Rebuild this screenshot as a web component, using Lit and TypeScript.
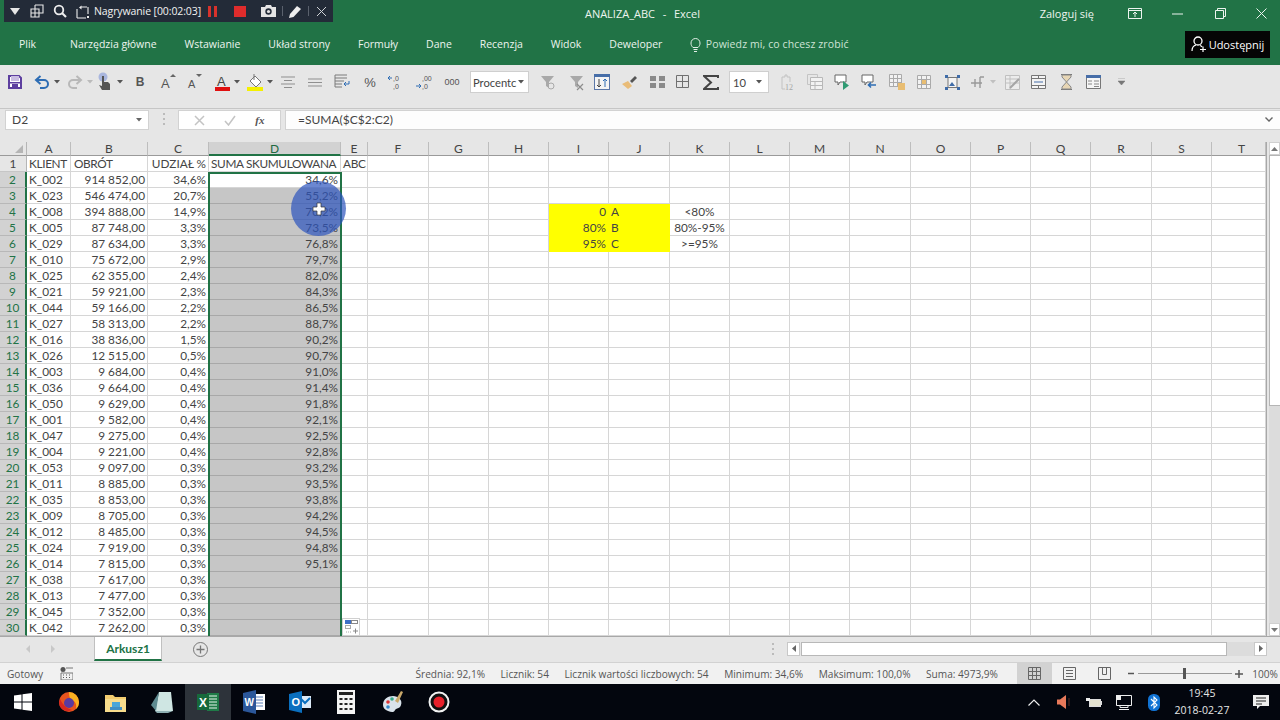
import { LitElement, html, css, svg } from "lit";
import { customElement } from "lit/decorators.js";

const ic = (w: number, h: number, b: unknown, cls = "") =>
  html`<svg class=${cls} width=${w} height=${h} viewBox="0 0 ${w} ${h}">${b}</svg>`;
const caret = (c = "#555") => ic(6, 4, svg`<path d="M0 0h6L3 3.5z" fill=${c}/>`);
const G = "#8f8f8f";
const BL = "#2e6db4";

type Item = { x: number; w: number; t: unknown };
function place(items: Item[], origin = 0) {
  let cur = origin;
  return items.map((it) => {
    const left = it.x - it.w / 2;
    const m = left - cur;
    cur = left + it.w;
    return html`<span class="slot" style="margin-left:${m}px;width:${it.w}px">${it.t}</span>`;
  });
}

const rec: Item[] = [
  { x: 15, w: 10, t: ic(10, 7, svg`<path d="M0 0h10L5 7z" fill="#e6e6e6"/>`) },
  { x: 37, w: 14, t: ic(14, 14, svg`<path d="M5 1h8v8H9M1 5h8v8H1zM5 5V1M1 9h8M5 5v8" fill="none" stroke="#e8e8e8" stroke-width="1.1"/>`) },
  { x: 60, w: 14, t: ic(14, 14, svg`<circle cx="6" cy="6" r="4.3" fill="none" stroke="#eee" stroke-width="1.8"/><path d="M9 9l4 4" stroke="#eee" stroke-width="2.2"/>`) },
  { x: 82, w: 15, t: ic(15, 15, svg`<path d="M2 14V5M2 14h9M6 3h6M13 3v7" fill="none" stroke="#eee" stroke-width="1.1"/><path d="M4 3.5L6.5 1.5v4zM12 12h2v2h-2z" fill="#eee"/>`) },
  { x: 147.5, w: 112, t: html`<span class="rectext">Nagrywanie [00:02:03]</span>` },
  { x: 212.5, w: 9, t: ic(9, 11, svg`<path d="M0 0h3v11H0zM6 0h3v11H6z" fill="#d8322c"/>`) },
  { x: 239.5, w: 12, t: ic(12, 11, svg`<rect width="12" height="11" fill="#df2c2c"/>`) },
  { x: 268, w: 15, t: ic(15, 12, svg`<path d="M0 2h4l1-2h5l1 2h4v10H0z" fill="#e4e4e4"/><circle cx="7.5" cy="6.5" r="3.2" fill="#232b38"/><circle cx="7.5" cy="6.5" r="1.6" fill="#e4e4e4"/>`) },
  { x: 282, w: 1, t: html`<span class="recsep"></span>` },
  { x: 295, w: 13, t: ic(13, 13, svg`<path d="M0 13l1-4 7-8 4 3-7.5 8z" fill="#eee"/>`) },
  { x: 308, w: 1, t: html`<span class="recsep"></span>` },
  { x: 321, w: 11, t: ic(11, 11, svg`<path d="M1 1l9 9M10 1l-9 9" stroke="#cfd2d6" stroke-width="1"/>`) },
];

const filterIco = svg`<path d="M2 2h13L10 8v6l-3-2V8z" fill="#a9a9a9"/>`;
const tb: Item[] = [
  { x: 15, w: 14, t: ic(14, 14, svg`<path d="M1 1h10l2 2v10H1z" fill="#fff" stroke="#5d3f9f" stroke-width="2"/><rect x="3" y="1" width="8" height="5" fill="#c9bce2"/><rect x="1" y="7" width="12" height="1.500" fill="#5d3f9f"/><rect x="4" y="9" width="6" height="4" fill="#5d3f9f"/>`) },
  { x: 42, w: 16, t: ic(16, 14, svg`<path d="M3 5h7a4 4 0 0 1 0 8H6" fill="none" stroke=${BL} stroke-width="2"/><path d="M6.5 1L2 5l4.500 4" fill="none" stroke=${BL} stroke-width="2"/>`) },
  { x: 56.5, w: 6, t: caret() },
  { x: 75, w: 16, t: ic(16, 14, svg`<path d="M13 5H6a4 4 0 0 0 0 8h4" fill="none" stroke="#b8b8b8" stroke-width="2"/><path d="M9.500 1L14 5 9.500 9" fill="none" stroke="#b8b8b8" stroke-width="2"/>`) },
  { x: 89.5, w: 6, t: caret("#bbb") },
  { x: 104, w: 14, t: ic(14, 20, svg`<circle cx="6" cy="5" r="4.5" fill="#a9b6de"/><path d="M5 4h2v6h4l2 2v6H5l-3-5 3 1z" fill="#555"/>`) },
  { x: 120, w: 6, t: caret() },
  { x: 140, w: 11, t: html`<span class="tb-b">B</span>` },
  { x: 168, w: 16, t: ic(16, 18, svg`<text x="1" y="15" class="ta" font-size="13" fill="#555">A</text><path d="M10 4l3-3 3 3z" fill="#666"/>`) },
  { x: 195, w: 16, t: ic(16, 18, svg`<text x="1" y="15" class="ta" font-size="11" fill="#555">A</text><path d="M9 1h6l-3 3z" fill="#666"/>`) },
  { x: 222, w: 15, t: ic(15, 18, svg`<text x="2" y="12.500" class="ta" font-size="13" fill="#444">A</text><rect y="14" width="15" height="4" fill="#e01010"/>`) },
  { x: 236.500, w: 6, t: caret() },
  { x: 255, w: 16, t: ic(16, 18, svg`<path d="M3 8l5-5 6 6-5 5z" fill="#fff" stroke="#777"/><path d="M7 1v6" stroke="#777"/><rect y="14" width="16" height="4" fill="#f4f000"/>`) },
  { x: 269.500, w: 6, t: caret() },
  { x: 288, w: 14, t: ic(14, 14, svg`<path d="M0 2h14M3 5.500h8M0 9h14M3 12.500h8" stroke=${G}/>`) },
  { x: 315, w: 14, t: ic(14, 10, svg`<path d="M0 2h14M0 5.500h14M0 9h14" stroke=${G}/>`) },
  { x: 342, w: 16, t: ic(16, 16, svg`<path d="M1 1h12M1 4h12M1 7h9M1 10h7M1 13h7M1 1v12" stroke="#7a7a7a" fill="none"/><path d="M15 7v3h-5M12 8l-2 2 2 2" stroke=${BL} fill="none"/>`) },
  { x: 370, w: 14, t: html`<span class="tb-t p">%</span>` },
  { x: 396, w: 16, t: ic(16, 16, svg`<text x="5" y="7" class="ta" font-size="7" fill="#555">,0</text><text x="5" y="15" class="ta" font-size="7" fill="#555">,0</text><path d="M4 4H0M2 2L0 4l2 2" fill="none" stroke=${BL}/>`) },
  { x: 424, w: 16, t: ic(16, 16, svg`<text x="6" y="7" class="ta" font-size="7" fill="#555">,00</text><text x="6" y="15" class="ta" font-size="7" fill="#555">,0</text><path d="M0 12h5M3 10l2 2-2 2" fill="none" stroke=${BL}/>`) },
  { x: 452, w: 16, t: html`<span class="tb-t z">000</span>` },
  { x: 499.500, w: 59, t: html`<span class="combo"><span>Procentc</span>${caret()}</span>` },
  { x: 547, w: 16, t: ic(16, 17, svg`${filterIco}<circle cx="12" cy="12" r="3" fill="none" stroke="#a9a9a9"/>`) },
  { x: 576, w: 16, t: ic(16, 17, svg`${filterIco}<path d="M9 10l6 6M15 10l-6 6" stroke="#8c8c8c" stroke-width="1.200"/>`) },
  { x: 602, w: 16, t: ic(16, 16, svg`<rect x=".5" y=".5" width="15" height="15" fill="#f4f4f4" stroke="#5b77a8"/><rect width="16" height="3" fill="#476ea8"/><path d="M5 5v8M3 11l2 2 2-2" fill="none" stroke="#444"/><path d="M11 13V5M9 7l2-2 2 2" fill="none" stroke=${BL}/>`) },
  { x: 630, w: 16, t: ic(16, 15, svg`<path d="M0 9l6-3 4 5-4 3z" fill="#e9bc78"/><path d="M8 6l5-5 2 2-5 5z" fill="#555"/>`) },
  { x: 657, w: 15, t: ic(15, 12, svg`<path d="M0 0h6v5H0zM9 0h6v5H9zM0 7h6v5H0zM9 7h6v5H9z" fill="#8a8a8a"/>`) },
  { x: 683, w: 14, t: ic(14, 14, svg`<path d="M.5.500h12v12H.5zM6.500.500v12M.5 6.500h12" fill="none" stroke="#707070"/>`) },
  { x: 711, w: 16, t: ic(16, 15, svg`<path d="M15 3V1H1l7 6.500L1 14h14v-2" fill="none" stroke="#444" stroke-width="2"/>`) },
  { x: 749, w: 40, t: html`<span class="combo c10"><span>10</span>${caret()}</span>` },
  { x: 788, w: 16, t: ic(16, 17, svg`<path d="M2 3h3V1h2v2h3v5M2 3v12h3" fill="none" stroke="#c2c2c2"/><text x="5" y="16" class="ts" font-size="8" fill="#a5a5a5">12</text>`) },
  { x: 815, w: 16, t: ic(16, 16, svg`<path d="M.5.500h10v3M.5.500v10h3" fill="none" stroke="#c4c4c4"/><path d="M3.500 3.500h12v12h-12zM3.500 7.500h12M3.500 11.500h12M8 7.500v8" fill="#f2f2f2" stroke="#b8b8b8"/>`) },
  { x: 842, w: 16, t: ic(16, 16, svg`<path d="M1 1h11v7H6l-2 3V8H1z" fill="#fff" stroke="#666"/><path d="M9 7l6 4.500L9 16z" fill="#2f9a72"/>`) },
  { x: 869, w: 16, t: ic(16, 16, svg`<path d="M1 1h11v7H6l-2 3V8H1z" fill="#fff" stroke="#666"/><path d="M15 11H8M10 8.500l-2.500 2.500 2.500 2.500" fill="none" stroke=${BL} stroke-width="1.600"/>`) },
  { x: 897, w: 16, t: ic(16, 16, svg`<path d="M.5.500h12v12H.5zM4.500.500v12M8.500.500v12M.5 4.500h12M.5 8.500h12" fill="#f2f2f2" stroke="#aaa"/><rect x="9" y="9" width="7" height="7" fill="#e8bd72"/>`) },
  { x: 924, w: 14, t: ic(14, 14, svg`<path d="M.5.500h13v13H.5zM.5 4.500h13M.5 9.500h13M4.500.500v13M9.500.500v13" fill="#f2f2f2" stroke="#aaa"/><rect x="5" y="5" width="4" height="4" fill="#e8bd72"/>`) },
  { x: 952, w: 15, t: ic(15, 15, svg`<rect x="3" y="2.500" width="9" height="10" fill="#f4f4f4" stroke="#777"/><path d="M4 11l3-4 3 4z" fill="#3f6ca8"/><path d="M0 0h3v3H0zM12 0h3v3h-3zM0 12h3v3H0zM12 12h3v3h-3z" fill="#3f6ca8"/>`) },
  { x: 978, w: 14, t: ic(14, 14, svg`<path d="M0 8h11M4 12V4M9 13V2M13 2H9" stroke="#999" stroke-width="1.400" fill="none"/>`) },
  { x: 993, w: 6, t: caret("#c0c0c0") },
  { x: 1012, w: 15, t: ic(15, 15, svg`<path d="M.5.500h14v14H.5zM.5 4h14M.5 8h14M5 .500v14" fill="#ececec" stroke="#c0c0c0"/><path d="M5 13L14 4" stroke="#a5a5a5" stroke-width="2"/>`) },
  { x: 1038, w: 15, t: ic(15, 14, svg`<path d="M.5.500h14v13H.5zM.5 3.500h14M.5 10.500h14M7.500.500v3M7.500 10.500v3" fill="#f4f4f4" stroke="#777"/><path d="M3 7h9" stroke="#476ea8"/>`) },
  { x: 1066, w: 13, t: ic(13, 16, svg`<path d="M1 .500h11M1 15.500h11" stroke="#777"/><path d="M2 1h9v2L6.500 8 11 13v2H2v-2l4.500-5L2 3z" fill="#e7d6b5" stroke="#888"/>`) },
  { x: 1093, w: 15, t: ic(15, 14, svg`<path d="M.5.500h14v13H.5z" fill="#f6f6f6" stroke="#777"/><rect width="15" height="3" fill="#476ea8"/><path d="M2 6h4M8 6h5M2 9h4M8 9h5M8 11.500h5" stroke="#888"/>`) },
  { x: 1121, w: 7, t: ic(7, 8, svg`<path d="M0 0h7M0 3h7L3.500 7z" fill="#777" stroke="#777" stroke-width=".5"/>`) },
];

const cols = "ABCDEFGHIJKLMNOPQRST".split("");
const colW = [44, 77, 61, 132, 27, 61, 60, 60, 60, 61, 60, 60, 60, 61, 60, 60, 60, 61, 60, 54];

const data: [string, string, string, string][] = [
  ["K_002", "914 852,00", "34,6%", "34,6%"],
  ["K_023", "546 474,00", "20,7%", "55,2%"],
  ["K_008", "394 888,00", "14,9%", "70,2%"],
  ["K_005", "87 748,00", "3,3%", "73,5%"],
  ["K_029", "87 634,00", "3,3%", "76,8%"],
  ["K_010", "75 672,00", "2,9%", "79,7%"],
  ["K_025", "62 355,00", "2,4%", "82,0%"],
  ["K_021", "59 921,00", "2,3%", "84,3%"],
  ["K_044", "59 166,00", "2,2%", "86,5%"],
  ["K_027", "58 313,00", "2,2%", "88,7%"],
  ["K_016", "38 836,00", "1,5%", "90,2%"],
  ["K_026", "12 515,00", "0,5%", "90,7%"],
  ["K_003", "9 684,00", "0,4%", "91,0%"],
  ["K_036", "9 664,00", "0,4%", "91,4%"],
  ["K_050", "9 629,00", "0,4%", "91,8%"],
  ["K_001", "9 582,00", "0,4%", "92,1%"],
  ["K_047", "9 275,00", "0,4%", "92,5%"],
  ["K_004", "9 221,00", "0,4%", "92,8%"],
  ["K_053", "9 097,00", "0,3%", "93,2%"],
  ["K_011", "8 885,00", "0,3%", "93,5%"],
  ["K_035", "8 853,00", "0,3%", "93,8%"],
  ["K_009", "8 705,00", "0,3%", "94,2%"],
  ["K_012", "8 485,00", "0,3%", "94,5%"],
  ["K_024", "7 919,00", "0,3%", "94,8%"],
  ["K_014", "7 815,00", "0,3%", "95,1%"],
  ["K_038", "7 617,00", "0,3%", ""],
  ["K_013", "7 477,00", "0,3%", ""],
  ["K_045", "7 352,00", "0,3%", ""],
  ["K_042", "7 262,00", "0,3%", ""],
];

const extras: Record<string, [string, string]> = {
  "I4": ["0", "r y"], "J4": ["A", "l y"],
  "I5": ["80%", "r y"], "J5": ["B", "l y"],
  "I6": ["95%", "r y"], "J6": ["C", "l y"],
  "K4": ["<80%", "c"], "K5": ["80%-95%", "c"], "K6": [">=95%", "c"],
  "A1": ["KLIENT", "l cap"], "B1": ["OBRÓT", "l cap ob"], "C1": ["UDZIAŁ %", "r"],
  "D1": ["SUMA SKUMULOWANA", "l cap"], "E1": ["ABC", "l cap"],
};

function cell(col: string, row: number) {
  let text = "";
  let cls = "cell";
  const ex = extras[col + row];
  if (ex) { text = ex[0]; cls += " " + ex[1]; }
  if (row >= 2) {
    const d = data[row - 2];
    if (col === "A") { text = d[0]; cls += " l"; }
    if (col === "B") { text = d[1]; cls += " r"; }
    if (col === "C") { text = d[2]; cls += " r"; }
    if (col === "D") { text = d[3]; cls += " r"; if (row > 2) cls += " sel"; }
  }
  return html`<div class=${cls}>${text}</div>`;
}

const tabs = ["Plik", "Narzędzia główne", "Wstawianie", "Układ strony", "Formuły", "Dane", "Recenzja", "Widok", "Deweloper"];
const stats = ["Średnia: 92,1%", "Licznik: 54", "Licznik wartości liczbowych: 54", "Minimum: 34,6%", "Maksimum: 100,0%", "Suma: 4973,9%"];

const task = [
  ic(18, 18, svg`<path d="M0 2.500L7.500 1.500V8.500H0zM8.500 1.300L18 0V8.500H8.500zM0 9.500h7.500v7L0 15.500zM8.500 9.500H18V18L8.500 16.700z" fill="#fff"/>`),
  ic(22, 22, svg`<circle cx="11" cy="11" r="10" fill="#e8541e"/><path d="M11 1a10 10 0 0 1 10 10c0 3-1 5-3 7 1-5-1-8-4-9-2-1-3-3-3-8z" fill="#fbb021"/><circle cx="11" cy="12" r="5" fill="#5a3aa0"/><path d="M2 8c2 4 5 9 12 11-5 3-13 0-13-8z" fill="#d8281f"/>`),
  ic(21, 19, svg`<path d="M0 2h8l2 2h11v15H0z" fill="#f2cc6f"/><rect y="6" width="21" height="13" fill="#f7dc8c"/><rect x="7" y="9" width="8" height="5" fill="#49a6d8"/><rect x="5" y="14" width="12" height="3" fill="#3f8fc4"/>`),
  ic(22, 22, svg`<path d="M8 1h12l2 19H4z" fill="#cfe6e3"/><path d="M8 1L0 14l5 6z" fill="#5d8a90"/><path d="M4 20h18l-5 2H6z" fill="#8fb0b3"/>`),
  ic(22, 22, svg`<rect x="10" y="2" width="12" height="18" fill="#1f7a47"/><path d="M12 5h8M12 8h8M12 11h8M12 14h8M12 17h8" stroke="#e8f4ec"/><rect y="3" width="12" height="16" fill="#17693b"/><text x="2" y="15.500" class="tw" font-size="12" fill="#fff">X</text>`),
  ic(22, 24, svg`<rect x="10" y="4" width="12" height="16" fill="#fff"/><path d="M12 7h8M12 10h8M12 13h8M12 16h8" stroke="#5a7fb8"/><path d="M0 3l13-3v24L0 21z" fill="#2b579a"/><text x="1.500" y="16" class="tw" font-size="10" fill="#fff">W</text>`),
  ic(22, 22, svg`<rect x="10" y="5" width="12" height="12" fill="#dbe9f7"/><path d="M12 8l4 4 5-5" fill="none" stroke="#0a6fbf" stroke-width="2"/><path d="M0 3l13-3v22L0 19z" fill="#0a6fbf"/><text x="2.500" y="15" class="tw" font-size="11" fill="#fff">O</text>`),
  ic(18, 24, svg`<rect width="18" height="24" fill="#f4f4f4"/><rect x="2" y="2" width="14" height="3" fill="#222"/><path d="M2.500 8h3v2h-3zM7.500 8h3v2h-3zM12.500 8h3v2h-3zM2.500 13h3v2h-3zM7.500 13h3v2h-3zM12.500 13h3v2h-3zM2.500 18h3v2h-3zM7.500 18h3v2h-3zM12.500 18h3v2h-3z" fill="#222"/>`),
  ic(22, 24, svg`<path d="M1 15c0-6 5-9 10-9s10 4 8 9c-1 4-5 3-6 5-1 3-4 2-7 1-3-1-5-3-5-6z" fill="#d9e2ea"/><circle cx="6" cy="12" r="1.800" fill="#d33"/><circle cx="10" cy="9" r="1.800" fill="#3a8"/><circle cx="6" cy="17" r="1.800" fill="#38c"/><path d="M13 11L19 1l2 1-5 11z" fill="#c9a86a"/>`),
  ic(22, 22, svg`<circle cx="11" cy="11" r="9.500" fill="#111" stroke="#f2f2f2" stroke-width="2"/><circle cx="11" cy="11" r="5.500" fill="#e8202a"/>`),
];

@customElement("app-root")
export class AppRoot extends LitElement {
  static styles = css`
    :host { display: flex; flex-direction: column; width: 1280px; height: 720px; position: relative; overflow: hidden;
      font-family: "Open Sans", "Liberation Sans", sans-serif; background: #e6e6e6; color: #444; }
    svg { display: block; flex: none; }
    svg text.ta { font-family: "Liberation Sans", sans-serif; }
    svg text.ts { font-family: "Liberation Serif", serif; }
    svg text.tw { font-family: "Liberation Sans", sans-serif; font-weight: 700; }
    .slot { flex: none; display: flex; align-items: center; justify-content: center; }

    .head { height: 65px; background: #217346; color: #edf4ef; display: flex; flex-direction: column; flex: none; position: relative; }
    .title { height: 27px; display: grid; grid-template-columns: 1fr auto 1fr; align-items: center; font-size: 11px; box-sizing: border-box; }
    .ttl { padding-left: 5px; word-spacing: 1px; }
    .winbtns { display: flex; justify-content: flex-end; align-items: center; }
    .login { margin-right: 19px; }
    .wb { width: 43px; display: flex; justify-content: center; }
    .wb.last { width: 38px; }
    .tabs { flex: 1; display: flex; align-items: center; gap: 27.9px; padding: 0 10px 4px 19px; font-size: 10.5px; }
    .tabs span.first { margin-right: 6px; }
    .tell { display: flex; align-items: center; gap: 5px; margin-left: -0.5px; color: #cfe3d6; letter-spacing: 0.1px; }
    .share { margin-left: auto; width: 85px; height: 27px; background: #050505; color: #fff; display: flex; align-items: center; justify-content: center; gap: 3px; font-size: 11px; box-sizing: border-box; }

    .recbar { position: absolute; left: 4px; top: 0; width: 329px; height: 22px; background: #232b38; display: flex; align-items: center; color: #f2f2f2; }
    .rectext { font-size: 10.5px; white-space: nowrap; letter-spacing: -0.1px; }
    .recsep { width: 1px; height: 10px; background: #5a616d; display: block; }

    .toolbar { height: 44px; flex: none; background: #e6e6e6; border-bottom: 1px solid #c6c6c6; box-sizing: border-box; display: flex; align-items: flex-start; padding-top: 7px; }
    .toolbar .slot { height: 20px; }
    .tb-b { font: 700 12px "Liberation Sans", sans-serif; color: #555; }
    .tb-t { color: #555; font-family: "Liberation Sans", sans-serif; }
    .tb-t.p { font-size: 13px; }
    .tb-t.z { font-size: 9px; }
    .combo { width: 100%; height: 22px; flex: none; background: #fff; border: 1px solid #cfcfcf; box-sizing: border-box; display: flex; align-items: center; justify-content: space-between; padding: 0 4px 0 2px; font-family: "Lato", sans-serif; font-size: 11.2px; color: #444; overflow: hidden; }
    .c10 { padding: 0 6px 0 3px; }

    .fbar { height: 33px; flex: none; background: #e6e6e6; display: flex; align-items: flex-start; padding-top: 1px; box-sizing: border-box; }
    .box { height: 20px; background: #fff; border: 1px solid #d2d2d2; box-sizing: border-box; display: flex; align-items: center; padding-bottom: 1px; font-family: "Lato", sans-serif; font-size: 12px; color: #444; }
    .name { width: 144px; margin-left: 5px; padding: 0 6px 1px; justify-content: space-between; }
    .vdots { width: 29px; display: flex; justify-content: center; padding-top: 3px; }
    .fx { width: 103px; justify-content: space-around; padding: 0 6px; }
    .fxt { font: italic 700 11px "Liberation Serif", serif; color: #555; }
    .fm { flex: 1; margin-left: 4px; padding: 0 7px 1px 12px; justify-content: space-between; background: #fdfdfd; border-right: none; }

    .sheetrow { flex: none; height: 495px; display: flex; border-bottom: 1px solid #a8a8a8; box-sizing: border-box; position: relative; }
    .sheet { display: grid; grid-template-rows: 14px repeat(30, 16px); height: 494px; overflow: hidden; font-family: "Lato", sans-serif; font-size: 11.8px; color: #444; background: #fff; border-right: 1px solid #a8a8a8; flex: none; }
    .corner { background: #e6e6e6; border-right: 1px solid #b5b5b5; border-bottom: 1px solid #9a9a9a; box-sizing: border-box; display: flex; align-items: flex-end; justify-content: flex-end; padding: 0 3px 2px 0; }
    .ch { background: #e6e6e6; border-right: 1px solid #bdbdbd; border-bottom: 1px solid #9a9a9a; box-sizing: border-box; display: flex; justify-content: center; align-items: center; font-size: 12px; color: #444; line-height: 13px; }
    .ch.on { background: #d2d2d2; color: #1f6b42; border-bottom: 2px solid #217346; }
    .ch.tcol { padding-left: 6px; }
    .rh { background: #e6e6e6; border-right: 1px solid #b5b5b5; border-bottom: 1px solid #c6c6c6; box-sizing: border-box; display: flex; align-items: center; justify-content: center; color: #444; }
    .rh.on { background: #d2d2d2; color: #217346; border-right: 2px solid #217346; border-bottom-color: #b8b8b8; }
    .cell { border-right: 1px solid #d6d6d6; border-bottom: 1px solid #d6d6d6; box-sizing: border-box; padding: 0 2px; display: flex; align-items: center; white-space: nowrap; line-height: 15px; overflow: visible; min-width: 0; }
    .cell.l { justify-content: flex-start; }
    .cell.r { justify-content: flex-end; }
    .cell.c { justify-content: center; }
    .cell.cap { letter-spacing: -0.35px; }
    .cell.ob { padding-left: 3px; }
    .cell.y { background: #ffff00; border-color: #ffff00; }
    .cell.sel { background: #c6c6c6; border-right-color: #aaa; border-bottom-color: #a8a8a8; }
    .selbox { position: absolute; left: 208px; top: 30px; width: 134px; height: 464px; box-sizing: border-box; border: 2px solid #217346; border-bottom: none; pointer-events: none; z-index: 1; }

    .quick { position: absolute; left: 342px; top: 476px; width: 18px; height: 18px; background: #fff; border: 1px solid #d0d0d0; box-sizing: border-box; display: flex; align-items: center; justify-content: center; z-index: 2; }
    .cursor { position: absolute; left: 291px; top: 39px; width: 55px; height: 55px; border-radius: 50%; background: rgba(44, 84, 190, 0.7); display: flex; align-items: center; justify-content: center; z-index: 3; }

    .vscroll { flex: 1; display: flex; flex-direction: column; padding-left: 2px; background: #e6e6e6; }
    .sbtn { height: 13px; flex: none; background: #fff; border: 1px solid #d0d0d0; box-sizing: border-box; display: flex; align-items: center; justify-content: center; }
    .vthumb { height: 251px; flex: none; background: #fff; border: 1px solid #b5b5b5; border-right: none; box-sizing: border-box; }
    .vtrack { flex: 1; background: #dcdcdc; }

    .tabrow { height: 25px; flex: none; background: #e6e6e6; display: flex; align-items: flex-start; }
    .nav { width: 94px; height: 24px; flex: none; display: flex; align-items: center; justify-content: flex-start; gap: 21px; padding-left: 26px; box-sizing: border-box; }
    .sheettab { width: 68px; height: 24px; flex: none; background: #fff; border: 1px solid #c0c0c0; border-top: none; border-bottom: 2px solid #217346; box-sizing: border-box; display: flex; align-items: center; justify-content: center; color: #217346; font: 700 12px "Lato", sans-serif; }
    .plus { margin-left: 31px; margin-top: 5px; }
    .hs { margin-left: auto; display: flex; align-items: center; height: 25px; padding-right: 13px; margin-top: -1px; }
    .hs .dots { margin-right: 13px; }
    .hbtn { width: 13px; height: 14px; background: #fff; border: 1px solid #c8c8c8; box-sizing: border-box; display: flex; align-items: center; justify-content: center; }
    .hthumb { width: 426px; height: 14px; background: #fff; border: 1px solid #b8b8b8; box-sizing: border-box; margin-left: 1px; }
    .htrack { width: 27px; height: 14px; background: #dcdcdc; }

    .status { height: 22px; flex: none; background: #f1f1f1; border-top: 1px solid #d2d2d2; box-sizing: border-box; display: flex; align-items: center; font-size: 10.15px; color: #555; }
    .ready { margin-left: 7px; margin-right: 17px; }
    .stats { display: flex; gap: 15.5px; margin-left: auto; white-space: nowrap; }
    .views { display: flex; margin-left: 19px; height: 100%; }
    .v { width: 35px; display: flex; align-items: center; justify-content: center; }
    .v.on { background: #d2d2d2; }
    .zoom { display: flex; align-items: center; width: 158px; flex: none; padding-left: 5px; box-sizing: border-box; }
    .zoomtxt { margin-left: auto; margin-right: 2px; }

    .taskbar { flex: 1; background: #03060e; display: flex; align-items: center; color: #e6e6e6; }
    .tk { width: 46.2px; height: 36px; flex: none; display: flex; align-items: center; justify-content: center; }
    .tk.on { background: #2d333a; }
    .tray { margin-left: auto; display: flex; align-items: center; height: 36px; }
    .tr { width: 30px; display: flex; align-items: center; justify-content: center; }
    .clock { width: 64px; margin-left: 1px; text-align: center; font-size: 10.5px; line-height: 17px; margin-right: 8px; }
    .notif { width: 38px; display: flex; justify-content: center; }
  `;

  render() {
    const rows = [];
    for (let r = 0; r <= 30; r++) {
      if (r === 0) {
        rows.push(html`<div class="corner">${ic(8, 8, svg`<path d="M8 0v8H0z" fill="#b5b5b5"/>`)}</div>`);
        cols.forEach((c) => rows.push(html`<div class="ch ${c === "D" ? "on" : ""} ${c === "T" ? "tcol" : ""}">${c}</div>`));
      } else {
        rows.push(html`<div class="rh ${r >= 2 ? "on" : ""}">${r}</div>`);
        cols.forEach((c) => rows.push(cell(c, r)));
      }
    }
    const tmpl = `27px ${colW.map((w) => w + "px").join(" ")}`;
    return html`
      <div class="head">
        <div class="title">
          <span></span>
          <span class="ttl">ANALIZA_ABC&nbsp; -&nbsp; Excel</span>
          <div class="winbtns">
            <span class="login">Zaloguj się</span>
            <span class="wb">${ic(14, 11, svg`<path d="M.5.500h13v10H.5zM.5 2.500h13M7 9V4M5 6l2-2 2 2" fill="none" stroke="#edf4ef"/>`)}</span>
            <span class="wb">${ic(11, 2, svg`<path d="M0 1h11" stroke="#edf4ef"/>`)}</span>
            <span class="wb">${ic(11, 11, svg`<path d="M.5 2.500h8v8h-8zM2.500 2.500v-2h8v8h-2" fill="none" stroke="#edf4ef"/>`)}</span>
            <span class="wb last">${ic(11, 11, svg`<path d="M.5.500l10 10M10.500.500l-10 10" stroke="#edf4ef"/>`)}</span>
          </div>
        </div>
        <div class="tabs">
          ${tabs.map((t, i) => html`<span class=${i === 0 ? "first" : ""}>${t}</span>`)}
          <span class="tell">${ic(11, 15, svg`<path d="M3 10.500C1.500 9 1 8 1 6a4.500 4.500 0 0 1 9 0c0 2-.5 3-2 4.500zM3.500 12.500h4M4 14.500h3" fill="none" stroke="#e4efe8"/>`)}Powiedz mi, co chcesz zrobić</span>
          <span class="share">${ic(15, 16, svg`<circle cx="7" cy="5" r="4" fill="none" stroke="#fff" stroke-width="1.300"/><path d="M1 15c0-4 2-5.500 4-6M9 9.500c1 .3 1.500.7 2 1.300M9 13.500h6M12 10.500v6" fill="none" stroke="#fff" stroke-width="1.200"/>`)}Udostępnij</span>
        </div>
        <div class="recbar">${place(rec, 4)}</div>
      </div>

      <div class="toolbar">${place(tb)}</div>

      <div class="fbar">
        <div class="box name"><span>D2</span>${caret("#666")}</div>
        <div class="vdots">${ic(2, 12, svg`<path d="M0 0h2v2H0zM0 5h2v2H0zM0 10h2v2H0z" fill="#bbb"/>`)}</div>
        <div class="box fx">
          ${ic(11, 11, svg`<path d="M1 1l9 9M10 1l-9 9" stroke="#c4c4c4" stroke-width="1.500"/>`)}
          ${ic(12, 11, svg`<path d="M1 6l3.500 4L11 1" fill="none" stroke="#c4c4c4" stroke-width="1.500"/>`)}
          <span class="fxt">fx</span>
        </div>
        <div class="box fm"><span>=SUMA($C$2:C2)</span>${ic(8, 5, svg`<path d="M.5.500L4 4 7.500.500" fill="none" stroke="#666" stroke-width="1.400"/>`)}</div>
      </div>

      <div class="sheetrow">
        <div class="sheet" style="grid-template-columns:${tmpl}">${rows}</div>
        <div class="vscroll">
          <div class="sbtn">${ic(7, 4, svg`<path d="M0 4h7L3.500 0z" fill="#777"/>`)}</div>
          <div class="vthumb"></div>
          <div class="vtrack"></div>
          <div class="sbtn">${ic(7, 4, svg`<path d="M0 0h7L3.500 4z" fill="#777"/>`)}</div>
        </div>
        <div class="selbox"></div>
        <div class="quick">${ic(13, 14, svg`<rect x="0" y="0" width="6" height="4" fill="#3e6fc7"/><rect x="6.500" y=".5" width="6" height="3" fill="#fff" stroke="#888"/><rect x=".5" y="5.500" width="5" height="3" fill="#fff" stroke="#aaa"/><path d="M1 12h5" stroke="#aaa" stroke-dasharray="1 1"/><path d="M8 11h5M10.500 8.500v5" stroke="#888"/>`)}</div>
        <div class="cursor">${ic(14, 14, svg`<path d="M5 1h4v4h4v4H9v4H5V9H1V5h4z" fill="#fff" stroke="#333" stroke-width=".7"/>`)}</div>
      </div>

      <div class="tabrow">
        <div class="nav">
          ${ic(4, 8, svg`<path d="M4 0v8L0 4z" fill="#c8c8c8"/>`)}
          ${ic(4, 8, svg`<path d="M0 0v8l4-4z" fill="#c8c8c8"/>`)}
        </div>
        <div class="sheettab">Arkusz1</div>
        <div class="plus">${ic(15, 15, svg`<circle cx="7.500" cy="7.500" r="7" fill="none" stroke="#777"/><path d="M7.500 3.500v8M3.500 7.500h8" stroke="#777" stroke-width="1.300"/>`)}</div>
        <div class="hs">
          <span class="dots">${ic(2, 12, svg`<path d="M0 0h2v2H0zM0 5h2v2H0zM0 10h2v2H0z" fill="#bbb"/>`)}</span>
          <span class="hbtn">${ic(4, 7, svg`<path d="M4 0v7L0 3.500z" fill="#666"/>`)}</span>
          <span class="hthumb"></span>
          <span class="htrack"></span>
          <span class="hbtn">${ic(4, 7, svg`<path d="M0 0v7l4-3.500z" fill="#666"/>`)}</span>
        </div>
      </div>

      <div class="status">
        <span class="ready">Gotowy</span>
        ${ic(13, 13, svg`<circle cx="3" cy="2.500" r="2.500" fill="#555"/><path d="M6 1h7M1 6h12v7H1z" fill="none" stroke="#777"/><path d="M3 8h1M6 8h1M9 8h1M3 10.500h1M6 10.500h1M9 10.500h1" stroke="#555"/>`)}
        <div class="stats">${stats.map((s) => html`<span>${s}</span>`)}</div>
        <div class="views">
          <span class="v on">${ic(13, 13, svg`<path d="M.5.500h12v12H.5zM4.500.500v12M8.500.500v12M.5 4.500h12M.5 8.500h12" fill="none" stroke="#666"/>`)}</span>
          <span class="v">${ic(13, 13, svg`<path d="M.5.500h12v12H.5zM3 3.500h7M3 6.500h7M3 9.500h7" fill="none" stroke="#666"/>`)}</span>
          <span class="v">${ic(13, 13, svg`<path d="M.5.500h12v12H.5zM4.500.500v7h4v-7" fill="none" stroke="#666"/>`)}</span>
        </div>
        <div class="zoom">
          ${ic(108, 11, svg`<path d="M1 5.500h6" stroke="#555" stroke-width="1.500"/><path d="M11 5.500h94" stroke="#999"/><rect x="56" y="0" width="3" height="11" fill="#555"/>`)}
          ${ic(8, 8, svg`<path d="M0 4h8M4 0v8" stroke="#555" stroke-width="1.500"/>`)}
          <span class="zoomtxt">100%</span>
        </div>
      </div>

      <div class="taskbar">
        ${task.map((t, i) => html`<span class="tk ${i === 4 ? "on" : ""}">${t}</span>`)}
        <div class="tray">
          <span class="tr">${ic(12, 7, svg`<path d="M.5 6.500L6 1l5.500 5.500" fill="none" stroke="#eee" stroke-width="1.200"/>`)}</span>
          <span class="tr">${ic(14, 14, svg`<path d="M0 4.500h3L9 0v14L3 9.500H0z" fill="#e8795a"/><path d="M12 3v8" stroke="#5a2a20"/>`)}</span>
          <span class="tr">${ic(16, 11, svg`<rect x="3.500" y="2.500" width="11" height="7" fill="#e4e2d0" stroke="#ddd"/><path d="M0 1h4v3H0z" fill="#eee"/><rect x="14.500" y="4" width="1.500" height="4" fill="#ddd"/>`)}</span>
          <span class="tr">${ic(16, 15, svg`<path d="M4 .500h11.500v10H.5V4M4 10.500v2h8v-2M3 14.500h10" fill="none" stroke="#eee"/><rect x="0" y="0" width="5" height="5" fill="#eee"/>`)}</span>
          <span class="tr">${ic(12, 17, svg`<rect width="12" height="17" rx="5.500" fill="#1173d4"/><path d="M3 5l6 6-3 3V3l3 3-6 6" fill="none" stroke="#fff" stroke-width="1.100"/>`)}</span>
          <div class="clock"><div>19:45</div><div>2018-02-27</div></div>
          <span class="notif">${ic(16, 15, svg`<path d="M0 0h16v11H7l-3 3v-3H0z" fill="#eee"/><path d="M3 3h10M3 6h10M3 9h6" stroke="#222"/>`)}</span>
        </div>
      </div>
    `;
  }
}
